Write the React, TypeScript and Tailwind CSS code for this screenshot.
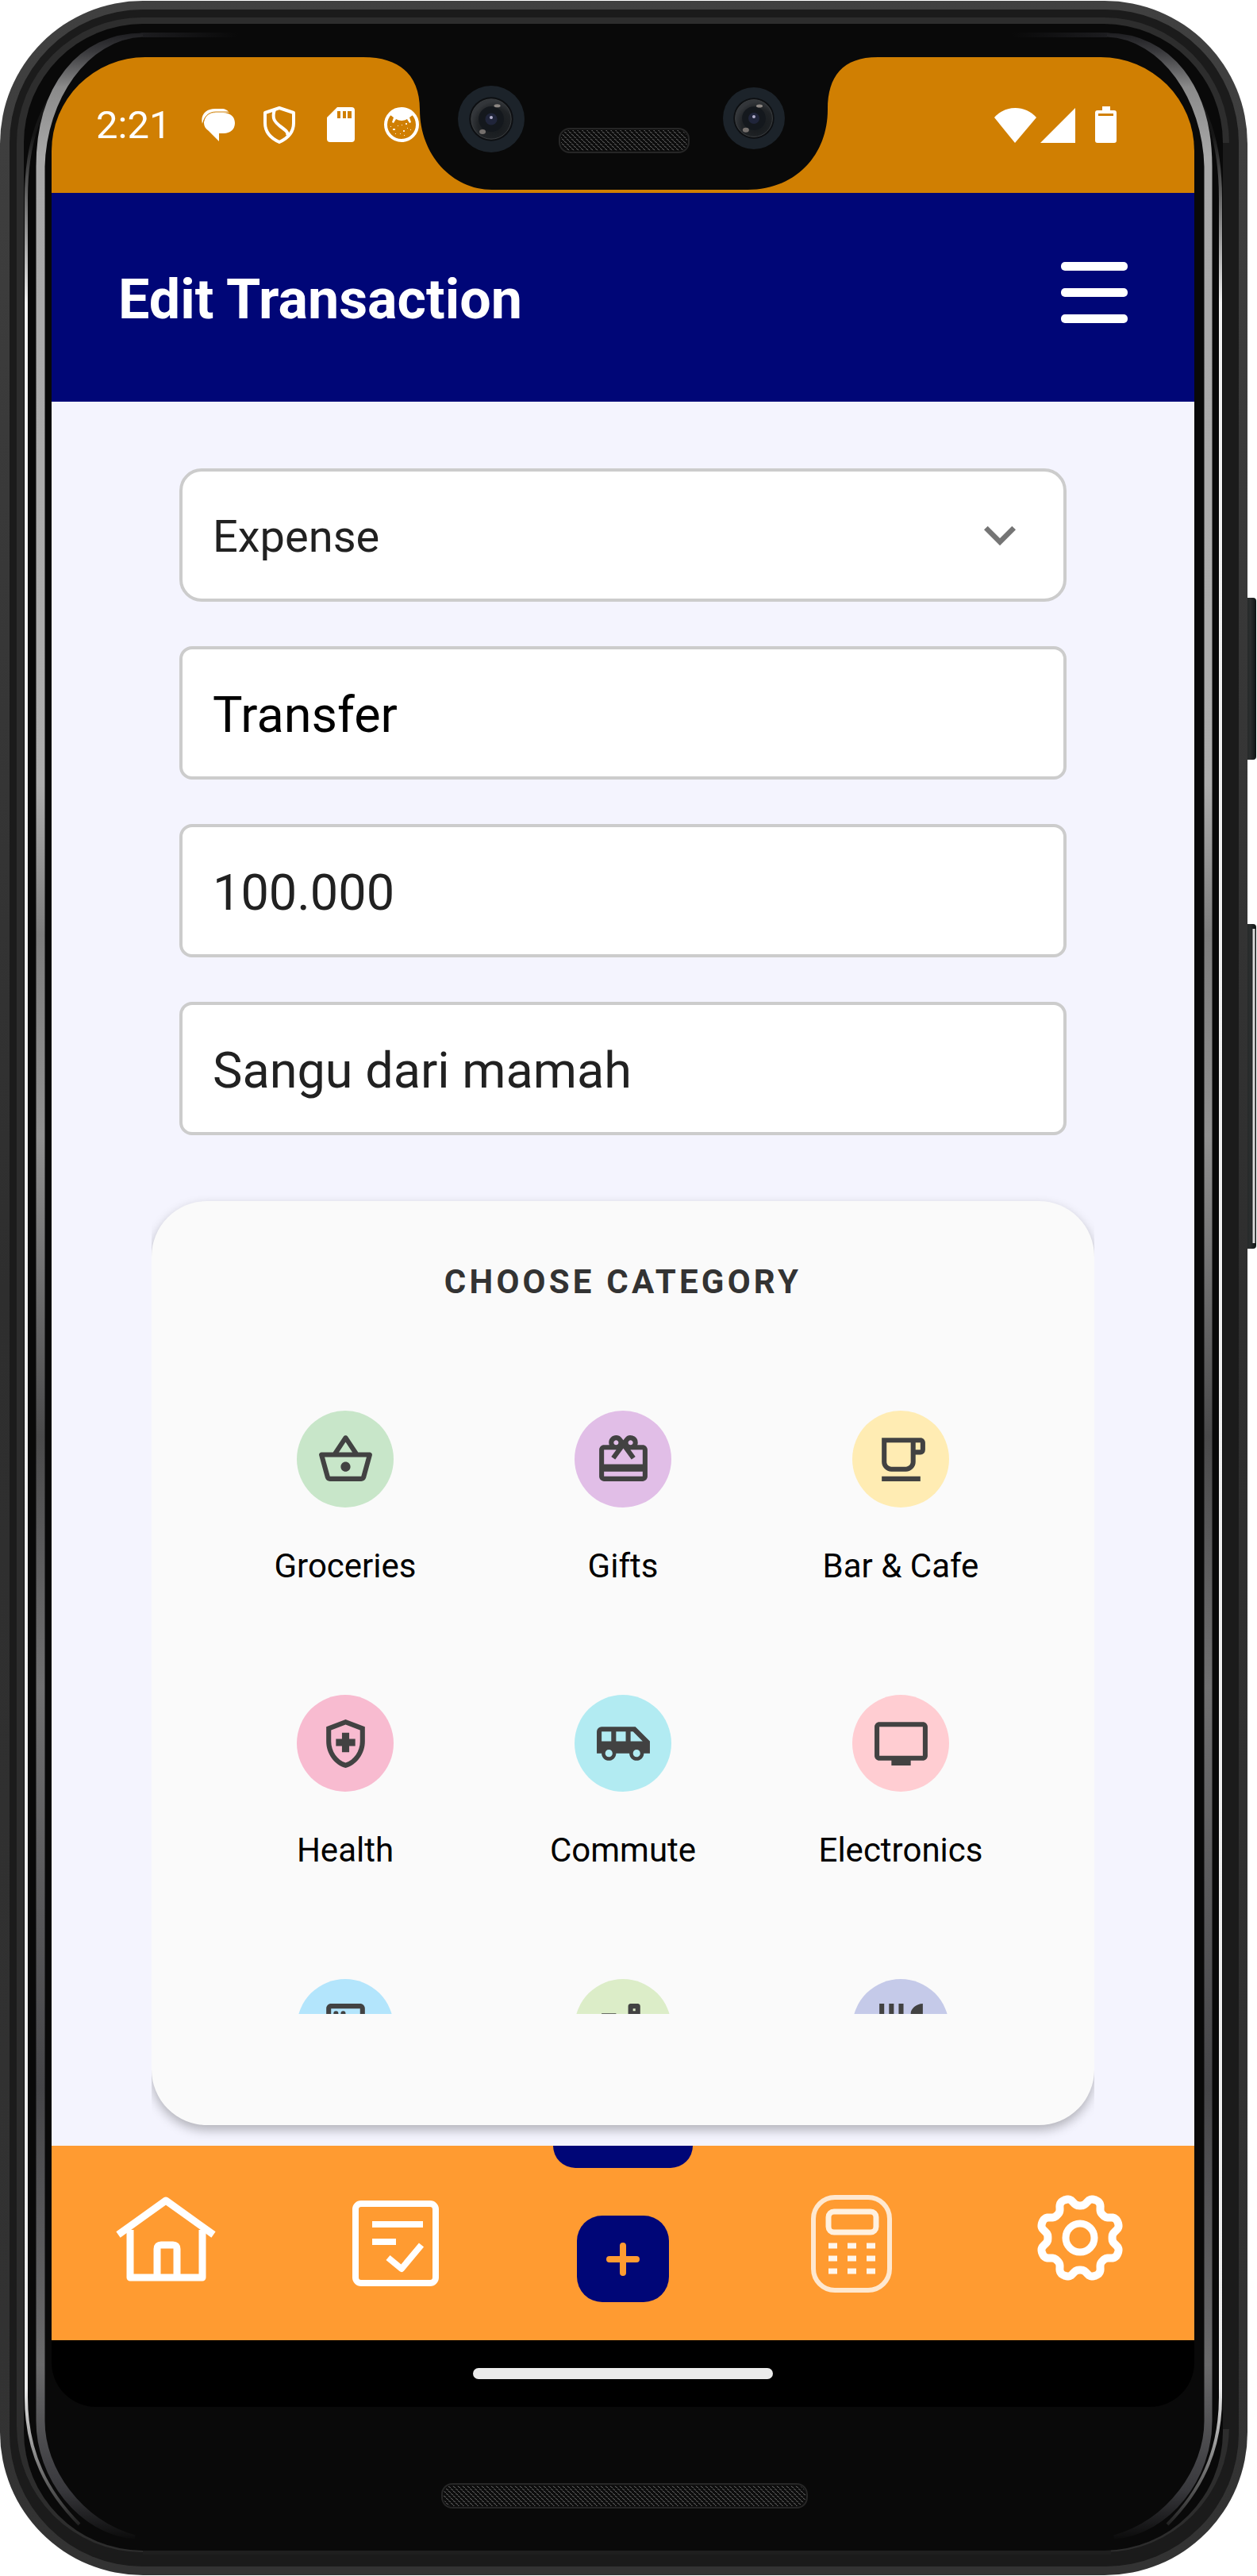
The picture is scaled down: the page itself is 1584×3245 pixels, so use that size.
import React from "react";
import {
  MdAirportShuttle,
  MdKeyboardArrowDown,
  MdOutlineCardGiftcard,
  MdOutlineFreeBreakfast,
  MdOutlineHealthAndSafety,
  MdOutlineLiquor,
  MdOutlineLocalLaundryService,
  MdOutlineRestaurant,
  MdOutlineShoppingBasket,
  MdOutlineTv,
} from "react-icons/md";

type Category = {
  name: string;
  tint: string;
  icon: React.ComponentType<{ className?: string }>;
  peek?: boolean;
};

const categories: Category[] = [
  { name: "Groceries", tint: "bg-[#c8e6c9]", icon: MdOutlineShoppingBasket },
  { name: "Gifts", tint: "bg-[#e1bee7]", icon: MdOutlineCardGiftcard },
  { name: "Bar & Cafe", tint: "bg-[#ffecb3]", icon: MdOutlineFreeBreakfast },
  { name: "Health", tint: "bg-[#f8bbd0]", icon: MdOutlineHealthAndSafety },
  { name: "Commute", tint: "bg-[#b2ebf2]", icon: MdAirportShuttle },
  { name: "Electronics", tint: "bg-[#ffcdd2]", icon: MdOutlineTv },
  { name: "Laundry", tint: "bg-[#b3e5fc]", icon: MdOutlineLocalLaundryService, peek: true },
  { name: "Liquor", tint: "bg-[#dcedc8]", icon: MdOutlineLiquor, peek: true },
  { name: "Restaurant", tint: "bg-[#c5cae9]", icon: MdOutlineRestaurant, peek: true },
];

/* Metal rim, glass reflections and side buttons of the handset. */
function DeviceFrame() {
  return (
    <svg
      className="absolute inset-0 h-full w-full"
      viewBox="0 0 1584 3245"
      preserveAspectRatio="none"
      aria-hidden="true"
    >
      <defs>
        <linearGradient id="rim" x1="0" y1="0" x2="0" y2="1">
          <stop offset="0" stopColor="#404040" />
          <stop offset="0.5" stopColor="#2e2e2e" />
          <stop offset="1" stopColor="#333333" />
        </linearGradient>
        <linearGradient id="glass" gradientUnits="userSpaceOnUse" x1="0" y1="40" x2="0" y2="3200">
          <stop offset="0" stopColor="#1c1c1f" />
          <stop offset="0.008" stopColor="#3a3a3d" />
          <stop offset="0.022" stopColor="#8a8a8a" />
          <stop offset="0.05" stopColor="#a8a8a8" />
          <stop offset="0.3" stopColor="#acacac" />
          <stop offset="0.36" stopColor="#7d7d7d" />
          <stop offset="0.44" stopColor="#919191" />
          <stop offset="0.56" stopColor="#4a4a4b" />
          <stop offset="0.66" stopColor="#707071" />
          <stop offset="0.82" stopColor="#454548" />
          <stop offset="0.93" stopColor="#6a6a6b" />
          <stop offset="0.98" stopColor="#38383c" />
          <stop offset="1" stopColor="#0a0a0a" />
        </linearGradient>
        <linearGradient id="flareLeft" x1="0" y1="0" x2="1" y2="0">
          <stop offset="0" stopColor="#1c1c1f" />
          <stop offset="1" stopColor="#090909" />
        </linearGradient>
        <linearGradient id="flareRight" x1="1" y1="0" x2="0" y2="0">
          <stop offset="0" stopColor="#1c1c1f" />
          <stop offset="1" stopColor="#090909" />
        </linearGradient>
        <linearGradient id="edge" gradientUnits="userSpaceOnUse" x1="0" y1="170" x2="0" y2="3190">
          <stop offset="0" stopColor="#161616" />
          <stop offset="0.07" stopColor="#f2f2f2" />
          <stop offset="0.94" stopColor="#ededed" />
          <stop offset="1" stopColor="#161616" />
        </linearGradient>
        <linearGradient id="key" x1="0" y1="0" x2="1" y2="0">
          <stop offset="0" stopColor="#191919" />
          <stop offset="0.6" stopColor="#2b2f2f" />
          <stop offset="1" stopColor="#101515" />
        </linearGradient>
      </defs>

      <rect x="1564" y="753" width="19" height="204" rx="4" fill="url(#key)" />
      <rect x="1564" y="1164" width="19" height="409" rx="4" fill="url(#key)" />
      <path d="M1580 1170V1566" stroke="#d8d8d8" strokeWidth="3" />

      <rect x="0" y="1" width="1572" height="3243" rx="180" fill="url(#rim)" />
      <rect x="12" y="12" width="1549" height="3221" rx="168" fill="#1b1b1b" />
      <rect x="21" y="22" width="1528" height="3193" rx="158" fill="#2d2d2d" />
      <rect x="1541" y="180" width="8" height="2880" fill="#1b1b1b" />
      <path d="M180 3215H1400" stroke="#1f1f1f" strokeWidth="6" />
      <rect x="30" y="30" width="1511" height="3183" rx="150" fill="#090909" />
      <path
        d="M90 90C50 130 33 180 33 250V3020C33 3090 60 3140 100 3180"
        fill="none"
        stroke="url(#edge)"
        strokeWidth="4"
      />
      <path
        d="M1484 90C1522 130 1538 180 1538 250V3020C1538 3090 1511 3140 1471 3180"
        fill="none"
        stroke="url(#edge)"
        strokeWidth="4"
      />
      <rect x="180" y="41" width="120" height="6" fill="url(#flareLeft)" />
      <rect x="1275" y="41" width="120" height="6" fill="url(#flareRight)" />
      <path
        d="M180 44C100 44 48 110 48 210V3050C48 3120 100 3190 170 3196C100 3176 54 3110 54 3050V210C56 125 108 47 180 44Z"
        fill="url(#glass)"
        stroke="url(#glass)"
        strokeWidth="5"
      />
      <path
        d="M1395 44C1474 44 1525 110 1525 210V3050C1525 3120 1474 3190 1404 3196C1474 3176 1520 3110 1520 3050V210C1518 125 1466 47 1395 44Z"
        fill="url(#glass)"
        stroke="url(#glass)"
        strokeWidth="5"
      />
    </svg>
  );
}

function Camera({ x, y, r }: { x: number; y: number; r: number }) {
  return (
    <g>
      <circle cx={x} cy={y} r={r} fill="#1c232a" />
      <circle cx={x} cy={y} r={r * 0.66} fill="#0d0f12" />
      <circle cx={x} cy={y} r={r * 0.6} fill="url(#lens)" stroke="#3c3f41" strokeWidth="1" />
      <circle cx={x} cy={y} r={r * 0.38} fill="#14181d" />
      <circle cx={x} cy={y} r={r * 0.18} fill="#20253a" />
      <circle cx={x} cy={y - 2} r="2" fill="#b3b0cc" />
      <ellipse cx={x + r * 0.18} cy={y - r * 0.4} rx="4" ry="2" fill="#8d8783" />
      <ellipse cx={x - r * 0.26} cy={y + r * 0.38} rx="4" ry="3" fill="#75706d" />
    </g>
  );
}

function Notch() {
  return (
    <svg
      className="absolute left-1/2 top-0 h-[168px] w-[660px] -translate-x-1/2"
      viewBox="455 72 660 168"
      aria-hidden="true"
    >
      <defs>
        <radialGradient id="lens" cx="0.6" cy="0.65" r="0.6">
          <stop offset="0" stopColor="#15191c" />
          <stop offset="0.7" stopColor="#202326" />
          <stop offset="1" stopColor="#33363a" />
        </radialGradient>
        <pattern id="mesh" width="6" height="6" patternUnits="userSpaceOnUse">
          <path d="M0 1L3 3M3 4L6 6" stroke="#6a6a6a" strokeWidth="1" />
        </pattern>
      </defs>
      <path
        d="M458 72C505 72 529 96 529 138C529 195 570 239 620 239H942C1003 239 1043 195 1043 138C1043 96 1062 72 1106 72Z"
        fill="#090909"
      />
      <Camera x={619} y={150} r={42} />
      <Camera x={950} y={149} r={39} />
      <rect x="705" y="162" width="163" height="30" rx="13" fill="#0d0d0d" stroke="#262626" strokeWidth="2" />
      <rect x="707" y="164" width="159" height="26" rx="11" fill="url(#mesh)" />
    </svg>
  );
}

function StatusBar() {
  return (
    <div className="relative flex h-[171px] items-center justify-between bg-[#d07f02] pl-14 pr-[95px] text-white">
      <div className="flex items-center gap-7">
        <span className="mr-2 text-[49px] leading-[56px]">2:21</span>
        <svg className="h-[49px] w-[49px]" viewBox="0 0 49 49" fill="#fff" aria-hidden="true">
          <path d="M4 23C1 11 9 4 20 4H28C33 4 36 6 38 9H22C12 9 6 14 4 23Z" />
          <path d="M21 9H30C39 9 45 14 45 22C45 30 39 35 31 35H25V45L12 32C8 29 6 26 6 22C6 14 12 9 21 9Z" />
          <path d="M5 25C5 14 12 8 21 8H38" fill="none" stroke="#d07f02" strokeWidth="1" />
        </svg>
        <svg
          className="h-[49px] w-[49px]"
          viewBox="0 0 49 49"
          fill="none"
          stroke="#fff"
          strokeWidth="4"
          strokeLinejoin="round"
          aria-hidden="true"
        >
          <path d="M24 3L6 9V22C6 33 13 41 24 46C35 41 42 33 42 22V9Z" />
          <path d="M18 5C14 17 19 21 25 26C32 31 36 34 34 38" />
        </svg>
        <svg className="h-[49px] w-[49px]" viewBox="0 0 49 49" aria-hidden="true">
          <path d="M20 2H38Q42 2 42 6V42Q42 46 38 46H11Q7 46 7 42V15Z" fill="#fff" />
          <path d="M20 7h4v9h-4zM27 7h4v9h-4zM33 7h5v9h-5z" fill="#d07f02" />
        </svg>
        <svg className="h-[49px] w-[49px]" viewBox="0 0 49 49" fill="#fff" aria-hidden="true">
          <circle cx="24" cy="24" r="20" fill="none" stroke="#fff" strokeWidth="4" />
          <path d="M10 12C14 5 18 3 24 3S34 5 38 12L34 15L36 21L34 22L31 17Q24 21 17 17L14 22L12 21L14 15Z" />
          <g opacity="0.85">
            <path d="M13 29h3v2h-3zM19 25h1v1h-1zM24 24h1v1h-1zM29 22h2v2h-2zM31 28h1v1h-1zM26 31h2v2h-2zM22 35h1v1h-1zM16 35h1v1h-1zM10 26h1v1h-1zM35 30h1v1h-1zM27 37h1v1h-1z" />
          </g>
        </svg>
      </div>
      <div className="flex items-center">
        <svg className="h-[48px] w-[158px]" viewBox="0 0 158 48" fill="#fff" aria-hidden="true">
          <path d="M1 14C15 -2 40 -2 54 14L27 46Z" />
          <path d="M103 2V46H59Z" />
          <path d="M137 0H147V5H152Q155 5 155 8V43Q155 46 152 46H131Q128 46 128 43V8Q128 5 131 5H137Z" />
          <path d="M132 9h19v3h-19z" fill="#d07f02" />
        </svg>
      </div>
      <Notch />
    </div>
  );
}

function Header() {
  return (
    <header className="flex h-[263px] items-center justify-between bg-[#000677] px-[84px]">
      <h1 className="pt-1 text-[70px] font-bold leading-[84px] text-white">Edit Transaction</h1>
      <button type="button" aria-label="Menu" className="mb-3 flex flex-col gap-[22px]">
        <span className="block h-[11px] w-[84px] rounded-[5px] bg-white" />
        <span className="block h-[11px] w-[84px] rounded-[5px] bg-white" />
        <span className="block h-[11px] w-[84px] rounded-[5px] bg-white" />
      </button>
    </header>
  );
}

const fieldBox = "h-[168px] w-full border-4 border-[#cccccc] bg-white pl-[38px] pt-1 outline-none";

function TransactionForm() {
  return (
    <form className="flex flex-col gap-14 px-[161px]">
      <div className="relative">
        <select
          aria-label="Transaction type"
          defaultValue="Expense"
          className={`${fieldBox} appearance-none rounded-[28px] text-[56px] text-[#212121]`}
        >
          <option>Expense</option>
        </select>
        <MdKeyboardArrowDown className="pointer-events-none absolute right-11 top-11 h-20 w-20 text-[#757575]" />
      </div>
      <input
        type="text"
        aria-label="Account"
        defaultValue="Transfer"
        className={`${fieldBox} rounded-[16px] text-[63px] text-black`}
      />
      <input
        type="text"
        inputMode="decimal"
        aria-label="Amount"
        defaultValue="100.000"
        className={`${fieldBox} rounded-[16px] text-[63px] text-[#212121]`}
      />
      <input
        type="text"
        aria-label="Note"
        defaultValue="Sangu dari mamah"
        className={`${fieldBox} rounded-[16px] text-[63px] text-[#212121]`}
      />
    </form>
  );
}

function CategoryCard() {
  return (
    <div className="mx-[126px] mt-[83px] overflow-x-clip">
      <section className="rounded-[70px] bg-[#fafafa] px-[69px] pb-[140px] pt-[74px] shadow-[0_6px_14px_rgba(0,0,0,0.28)]">
        <h2 className="text-center text-[42px] font-bold leading-[56px] tracking-widest text-[#333333]">
          CHOOSE CATEGORY
        </h2>
        <div className="mt-[134px] grid h-[760px] grid-cols-3 content-start gap-y-[134px] overflow-hidden">
          {categories.map(({ name, tint, icon: Icon, peek }) => (
            <button
              key={name}
              type="button"
              aria-label={name}
              className="flex flex-col items-center gap-[46px]"
            >
              <span className={`flex h-[122px] w-[122px] items-center justify-center rounded-full ${tint}`}>
                <Icon className="h-[73px] w-[73px] text-[#424242]" />
              </span>
              {!peek && <span className="text-[42px] leading-[56px] text-black">{name}</span>}
            </button>
          ))}
        </div>
      </section>
    </div>
  );
}

function gearOutline(cx: number, cy: number) {
  const points: string[] = [];
  for (let i = 0; i < 240; i++) {
    const a = (i / 240) * Math.PI * 2;
    const wave = Math.cos(8 * a);
    const r = 46 - 6 * Math.tanh(1.5 * wave);
    points.push(`${(cx + r * Math.sin(a)).toFixed(1)} ${(cy - r * Math.cos(a)).toFixed(1)}`);
  }
  return `M${points.join("L")}Z`;
}

const gearPath = gearOutline(64, 55);

function NavIcon({ label, children }: { label: string; children: React.ReactNode }) {
  return (
    <a href="#" aria-label={label} className="flex justify-center">
      <svg
        className="h-[124px] w-32"
        viewBox="0 0 128 124"
        fill="none"
        stroke="#fff"
        strokeWidth="9"
        strokeLinejoin="round"
        aria-hidden="true"
      >
        {children}
      </svg>
    </a>
  );
}

function BottomNav() {
  return (
    <nav className="relative grid h-[245px] grid-cols-5 items-center bg-[#ff9b31]">
      <span className="absolute left-1/2 top-0 h-7 w-44 -translate-x-1/2 rounded-b-[28px] bg-[#000677]" />
      <NavIcon label="Home">
        <path d="M4 51L64 8L124 51" />
        <path d="M19 45V105H110V45M53 105V69Q53 64 58 64H73Q78 64 78 69V105" />
      </NavIcon>
      <NavIcon label="Transactions">
        <rect x="15" y="12" width="101" height="100" rx="7" strokeWidth="8" />
        <path d="M36 38H100M36 60H66M56 80L73 94L98 64" strokeWidth="8" />
      </NavIcon>
      <div className="flex justify-center pt-10">
        <button
          type="button"
          aria-label="Add transaction"
          className="flex h-[109px] w-[116px] items-center justify-center rounded-[32px] bg-[#000677]"
        >
          <svg className="h-[42px] w-[42px]" viewBox="0 0 42 42" stroke="#ff9b31" strokeWidth="8" strokeLinecap="round" aria-hidden="true">
            <path d="M4 21H38M21 4V38" />
          </svg>
        </button>
      </div>
      <NavIcon label="Calculator">
        <rect x="16" y="4" width="96" height="117" rx="27" stroke="#ffe8cf" strokeWidth="6" />
        <rect x="35" y="22" width="60" height="26" rx="7" stroke="#fff1e0" strokeWidth="7" />
        <path
          d="M35 65h11M59 65h11M83 65h11M35 81h11M59 81h11M83 81h11M35 97h11M59 97h11M83 97h11"
          stroke="#fff6ec"
          strokeWidth="7"
        />
      </NavIcon>
      <NavIcon label="Settings">
        <path d={gearPath} strokeWidth="10" />
        <circle cx="64" cy="55" r="18" />
      </NavIcon>
    </nav>
  );
}

function Speaker() {
  return (
    <div className="flex justify-center pb-[85px] pl-[3px] pt-24">
      <svg className="h-8 w-[462px]" viewBox="0 0 462 32" aria-hidden="true">
        <rect x="1" y="1" width="460" height="30" rx="13" fill="#0d0d0d" stroke="#262626" strokeWidth="2" />
        <rect x="3" y="3" width="456" height="26" rx="11" fill="url(#mesh)" />
      </svg>
    </div>
  );
}

export default function App() {
  return (
    <div className="relative w-full bg-white pl-[65px] pr-[79px] pt-[72px] font-['Roboto',sans-serif]">
      <DeviceFrame />
      <div className="relative overflow-hidden rounded-b-[56px] rounded-t-[118px] bg-black">
        <StatusBar />
        <Header />
        <main className="bg-[#f4f4fe] pb-[26px] pt-[84px]">
          <TransactionForm />
          <CategoryCard />
        </main>
        <BottomNav />
        <div className="flex h-[84px] items-center justify-center">
          <span className="h-3.5 w-[378px] rounded-full bg-[#ebebeb]" />
        </div>
      </div>
      <div className="relative">
        <Speaker />
      </div>
    </div>
  );
}
